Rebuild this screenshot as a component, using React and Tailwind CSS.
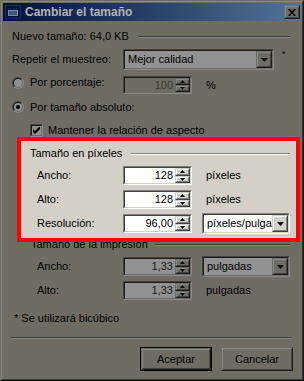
import React from 'react';

// palette: dimmed window chrome vs. the highlighted (normal) group
const FONT = "font-['Liberation_Sans',Arial,sans-serif]";

const Sunken = ({ dim, className = '', innerClass = '', children }) => (
  <div
    className={`border ${dim ? 'border-t-[#44423e] border-l-[#44423e] border-r-[#8a8a8a] border-b-[#8a8a8a]' : 'border-t-[#808080] border-l-[#808080] border-r-white border-b-white'} ${className}`}
  >
    <div
      className={`h-full border ${dim ? 'border-t-[#1c1b1a] border-l-[#1c1b1a] border-r-[#706c64] border-b-[#706c64]' : 'border-t-[#404040] border-l-[#404040] border-r-[#d4d0c8] border-b-[#d4d0c8]'} ${innerClass}`}
    >
      {children}
    </div>
  </div>
);

const Raised = ({ dim, className = '', innerClass = '', children }) => (
  <div
    className={`border ${dim ? 'border-t-[#706c64] border-l-[#706c64] border-r-[#1c1b1a] border-b-[#1c1b1a]' : 'border-t-[#d4d0c8] border-l-[#d4d0c8] border-r-[#404040] border-b-[#404040]'} ${className}`}
  >
    <div
      className={`h-full border flex items-center justify-center ${dim ? 'border-t-[#8a8a8a] border-l-[#8a8a8a] border-r-[#44423e] border-b-[#44423e] bg-[#706c64]' : 'border-t-white border-l-white border-r-[#808080] border-b-[#808080] bg-[#d4d0c8]'} ${innerClass}`}
    >
      {children}
    </div>
  </div>
);

const Arrow = ({ up, w = 5, h = 3 }) => (
  <svg width={w} height={h} viewBox={`0 0 ${w} ${h}`} className="block shrink-0">
    <polygon
      points={up ? `${w / 2},0 ${w},${h} 0,${h}` : `0,0 ${w},0 ${w / 2},${h}`}
      fill="#000"
    />
  </svg>
);

const SpinField = ({ dim, disabled, value }) => (
  <Sunken dim={dim} className="w-[69px] h-full shrink-0" innerClass="flex">
    <div
      className={`flex-1 flex items-center justify-end pr-[2px] ${disabled ? 'bg-[#706c64] text-[#3a3834]' : dim ? 'bg-[#929292] text-[#151515]' : 'bg-white text-black'}`}
    >
      {value}
    </div>
    <div className="w-[15px] flex flex-col">
      <Raised dim={dim} className="flex-1">
        <Arrow up />
      </Raised>
      <Raised dim={dim} className="flex-1">
        <Arrow />
      </Raised>
    </div>
  </Sunken>
);

const Select = ({ dim, value, className = '' }) => (
  <Sunken dim={dim} className={`h-[21px] shrink-0 ${className}`} innerClass="flex">
    <div
      className={`flex-1 min-w-0 overflow-hidden whitespace-nowrap flex items-center pl-[3px] ${dim ? 'bg-[#929292]' : 'bg-white'}`}
    >
      {value}
    </div>
    <Raised dim={dim} className="w-[16px] shrink-0">
      <Arrow w={7} h={4} />
    </Raised>
  </Sunken>
);

const Radio = ({ checked }) => (
  <svg width="12" height="12" viewBox="0 0 12 12" className="block shrink-0">
    <defs>
      <linearGradient id="rdo" x1="0" y1="0" x2="1" y2="1">
        <stop offset="0.5" stopColor="#44423e" />
        <stop offset="0.5" stopColor="#8a8a8a" />
      </linearGradient>
      <linearGradient id="rdi" x1="0" y1="0" x2="1" y2="1">
        <stop offset="0.5" stopColor="#1c1b1a" />
        <stop offset="0.5" stopColor="#706c64" />
      </linearGradient>
    </defs>
    <circle cx="6" cy="6" r="6" fill="url(#rdo)" />
    <circle cx="6" cy="6" r="5" fill="url(#rdi)" />
    <circle cx="6" cy="6" r="4" fill="#8e8e8e" />
    {checked && <circle cx="6" cy="6" r="2" fill="#000" />}
  </svg>
);

const Label = ({ w, children }) => <div className={`${w} shrink-0`}>{children}</div>;

export default function App() {
  return (
    <div
      className={`${FONT} text-[11px] leading-[13px] text-black w-[304px] h-[381px] border border-t-[#706c64] border-l-[#706c64] border-r-[#141413] border-b-[#141413] bg-[#706c64]`}
    >
      <div className="h-full border border-t-[#8a8a8a] border-l-[#8a8a8a] border-r-[#3a3834] border-b-[#3a3834] p-px flex flex-col">
        {/* title bar */}
        <div className="h-[18px] shrink-0 flex items-center bg-linear-to-r from-[#04113a] to-[#54749a] pl-[2px] pr-[1px]">
          <svg width="16" height="14" viewBox="0 0 16 14" className="block shrink-0">
            <rect x="0.5" y="0.5" width="15" height="13" fill="none" stroke="#2a44a8" strokeDasharray="1 1" />
            <rect x="3" y="3" width="10" height="8" fill="#7f8796" />
            <rect x="3" y="3" width="10" height="2" fill="#0c1e5a" />
            <rect x="4" y="6" width="8" height="4" fill="#3a5a86" />
          </svg>
          <span className="ml-[4px] font-bold text-[12px] text-[#b4b4b4] flex-1">Cambiar el tamaño</span>
          <Raised dim className="w-[16px] h-[14px]">
            <svg width="8" height="7" viewBox="0 0 8 7" className="block">
              <path d="M0 0 L2 0 L4 2.5 L6 0 L8 0 L5 3.5 L8 7 L6 7 L4 4.5 L2 7 L0 7 L3 3.5 Z" fill="#000" />
            </svg>
          </Raised>
        </div>

        {/* content */}
        <div className="flex flex-col pl-[9px] pr-[11px]">
          <div className="mt-[7px] h-[16px] flex items-center">
            <span>Nuevo tamaño: 64,0 KB</span>
            <div className="flex-1 ml-[9px] mt-[2px] h-[2px] border-t border-t-[#3a3834] border-b border-b-[#8a8a8a]" />
          </div>

          <div className="mt-[5px] h-[21px] flex items-center">
            <Label w="w-[111px]">Repetir el muestreo:</Label>
            <Select dim value="Mejor calidad" className="w-[151px]" />
            <span className="ml-[8px] self-start -mt-[1px] text-[9px]">*</span>
          </div>

          <div className="mt-[6px] h-[18px] flex items-center">
            <div className="w-[111px] shrink-0 self-start h-[13px] flex items-center gap-[6px]">
              <Radio />
              <span>Por porcentaje:</span>
            </div>
            <SpinField dim disabled value="100" />
            <span className="ml-[14px]">%</span>
          </div>

          <div className="mt-[5px] h-[16px] flex items-center gap-[6px]">
            <Radio checked />
            <span>Por tamaño absoluto:</span>
          </div>

          <div className="mt-[9px] h-[13px] flex items-center pl-[18px] gap-[5px]">
            <Sunken dim className="w-[13px] h-[13px]" innerClass="bg-[#8e8e8e] flex items-center justify-center">
              <svg width="7" height="7" viewBox="0 0 7 7" className="block">
                <path d="M0 2 L2 4 L7 -1 L7 2 L2 7 L0 5 Z" fill="#000" />
              </svg>
            </Sunken>
            <span>Mantener la relación de aspecto</span>
          </div>

          {/* highlighted group */}
          <div className="relative z-10 ml-[5px] -mr-[10px] h-[105px] border-4 border-[#ff0000] bg-[#d4d0c8] flex flex-col pl-[9px] pr-[6px]">
            <div className="mt-[6px] h-[13px] flex items-center">
              <span>Tamaño en píxeles</span>
              <div className="flex-1 ml-[9px] h-[2px] border-t border-t-[#808080] border-b border-b-white" />
            </div>
            <div className="mt-[6px] h-[19px] flex items-center pl-[7px]">
              <Label w="w-[86px]">Ancho:</Label>
              <SpinField value="128" />
              <span className="ml-[14px]">píxeles</span>
            </div>
            <div className="mt-[5px] h-[19px] flex items-center pl-[7px]">
              <Label w="w-[86px]">Alto:</Label>
              <SpinField value="128" />
              <span className="ml-[14px]">píxeles</span>
            </div>
            <div className="mt-[5px] h-[19px] flex items-center pl-[7px]">
              <Label w="w-[86px]">Resolución:</Label>
              <SpinField value="96,00" />
              <Select value="píxeles/pulgada" className="ml-[10px] w-[88px]" />
            </div>
          </div>

          <div className="-mt-[4px] h-[13px] flex items-center pl-[19px]">
            <span>Tamaño de la impresión</span>
            <div className="flex-1 ml-[7px] h-[2px] border-t border-t-[#3a3834] border-b border-b-[#8a8a8a]" />
          </div>
          <div className="mt-[6px] h-[19px] flex items-center pl-[25px]">
            <Label w="w-[86px]">Ancho:</Label>
            <SpinField dim value="1,33" />
            <Select dim value="pulgadas" className="ml-[10px] w-[88px]" />
          </div>
          <div className="mt-[5px] h-[19px] flex items-center pl-[25px]">
            <Label w="w-[86px]">Alto:</Label>
            <SpinField dim value="1,33" />
            <span className="ml-[14px]">pulgadas</span>
          </div>

          <div className="mt-[12px] h-[13px] pl-[2px]">* Se utilizará bicúbico</div>

          <div className="mt-[12px] h-[2px] -ml-[1px] -mr-[2px] border-t border-t-[#3a3834] border-b border-b-[#8a8a8a]" />

          <div className="mt-[8px] h-[24px] flex justify-end gap-[9px] -mr-[3px]">
            <div className="w-[72px] h-full border border-black">
              <Raised dim className="h-full">Aceptar</Raised>
            </div>
            <Raised dim className="w-[72px] h-full">Cancelar</Raised>
          </div>
        </div>
      </div>
    </div>
  );
}
